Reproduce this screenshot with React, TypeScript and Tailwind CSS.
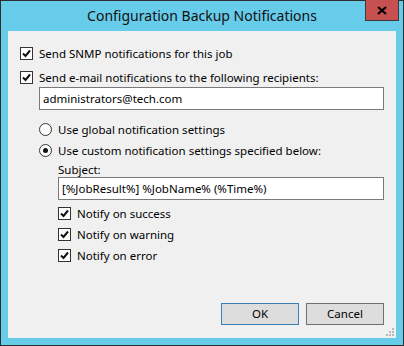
import type { ReactNode } from 'react';

const FONT = "font-['Segoe_UI','Noto_Sans',sans-serif]";

function Check({ label, className = '' }: { label: string; className?: string }) {
  return (
    <div className={`flex h-[13px] items-center ${className}`}>
      <span className="flex h-[13px] w-[13px] shrink-0 items-center justify-center border border-[#333333] bg-white">
        <svg width="9" height="9" viewBox="0 0 9 9" aria-hidden>
          <path d="M1 4.5 L3.5 7 L8 1.5" fill="none" stroke="#111" strokeWidth="2" />
        </svg>
      </span>
      <span className="ml-[6px] whitespace-nowrap">{label}</span>
    </div>
  );
}

function Radio({ label, checked, className = '' }: { label: string; checked?: boolean; className?: string }) {
  return (
    <div className={`flex h-[13px] items-center ${className}`}>
      <span className="flex h-[13px] w-[13px] shrink-0 items-center justify-center rounded-full border border-[#333333] bg-white">
        {checked ? <span className="h-[5px] w-[5px] rounded-full bg-[#111]" /> : null}
      </span>
      <span className="ml-[6px] whitespace-nowrap">{label}</span>
    </div>
  );
}

function Field({ children, className = '' }: { children: ReactNode; className?: string }) {
  return (
    <div className={`flex h-[23px] items-center border border-[#7a7a7a] bg-white px-[3px] ${className}`}>
      {children}
    </div>
  );
}

export default function App() {
  return (
    <div className={`flex h-[346px] w-[404px] flex-col border border-[#2d2d2d] bg-[#67cbea] ${FONT} text-[11.5px] text-black`}>
      <div className="relative flex h-[30px] shrink-0 items-center justify-center">
        <span className="text-[14px] leading-none text-[#111]">Configuration Backup Notifications</span>
        <button
          type="button"
          className="absolute right-[4px] top-[-1px] flex h-[21px] w-[34px] items-center justify-center border border-[#3a3a3a] border-t-0 bg-[#c75050]"
        >
          <svg width="10" height="9" viewBox="0 0 10 9" aria-hidden>
            <path d="M1 1 L9 8 M9 1 L1 8" stroke="#000" strokeWidth="2.2" />
          </svg>
        </button>
      </div>
      <div className="relative mx-[7px] mb-[7px] flex flex-1 flex-col bg-[#f0f0f0] pl-[12px] pt-[16px]">
        <Check label="Send SNMP notifications for this job" />
        <Check label="Send e-mail notifications to the following recipients:" className="mt-[11px]" />
        <Field className="ml-[19px] mt-[3px] w-[345px]">administrators@tech.com</Field>
        <div className="ml-[19px] mt-[13px] flex flex-col">
          <Radio label="Use global notification settings" />
          <Radio label="Use custom notification settings specified below:" checked className="mt-[8px]" />
          <div className="ml-[19px] mt-[5px] flex flex-col">
            <span className="leading-[15px]">Subject:</span>
            <Field className="w-[326px]">[%JobResult%] %JobName% (%Time%)</Field>
            <Check label="Notify on success" className="mt-[7px]" />
            <Check label="Notify on warning" className="mt-[8px]" />
            <Check label="Notify on error" className="mt-[8px]" />
          </div>
        </div>
        <div className="mt-auto mb-[13px] mr-[12px] flex justify-end gap-[7px]">
          <button type="button" className="h-[22px] w-[78px] border border-[#3c7fb1] bg-[#dddddd]">
            OK
          </button>
          <button type="button" className="h-[22px] w-[78px] border border-[#707070] bg-[#dddddd]">
            Cancel
          </button>
        </div>
        <svg className="absolute bottom-[1px] right-[1px]" width="9" height="9" viewBox="0 0 9 9" aria-hidden>
          <g fill="#b8b8b8">
            <rect x="6" y="0" width="2" height="2" />
            <rect x="3" y="3" width="2" height="2" />
            <rect x="6" y="3" width="2" height="2" />
            <rect x="0" y="6" width="2" height="2" />
            <rect x="3" y="6" width="2" height="2" />
            <rect x="6" y="6" width="2" height="2" />
          </g>
        </svg>
      </div>
    </div>
  );
}
